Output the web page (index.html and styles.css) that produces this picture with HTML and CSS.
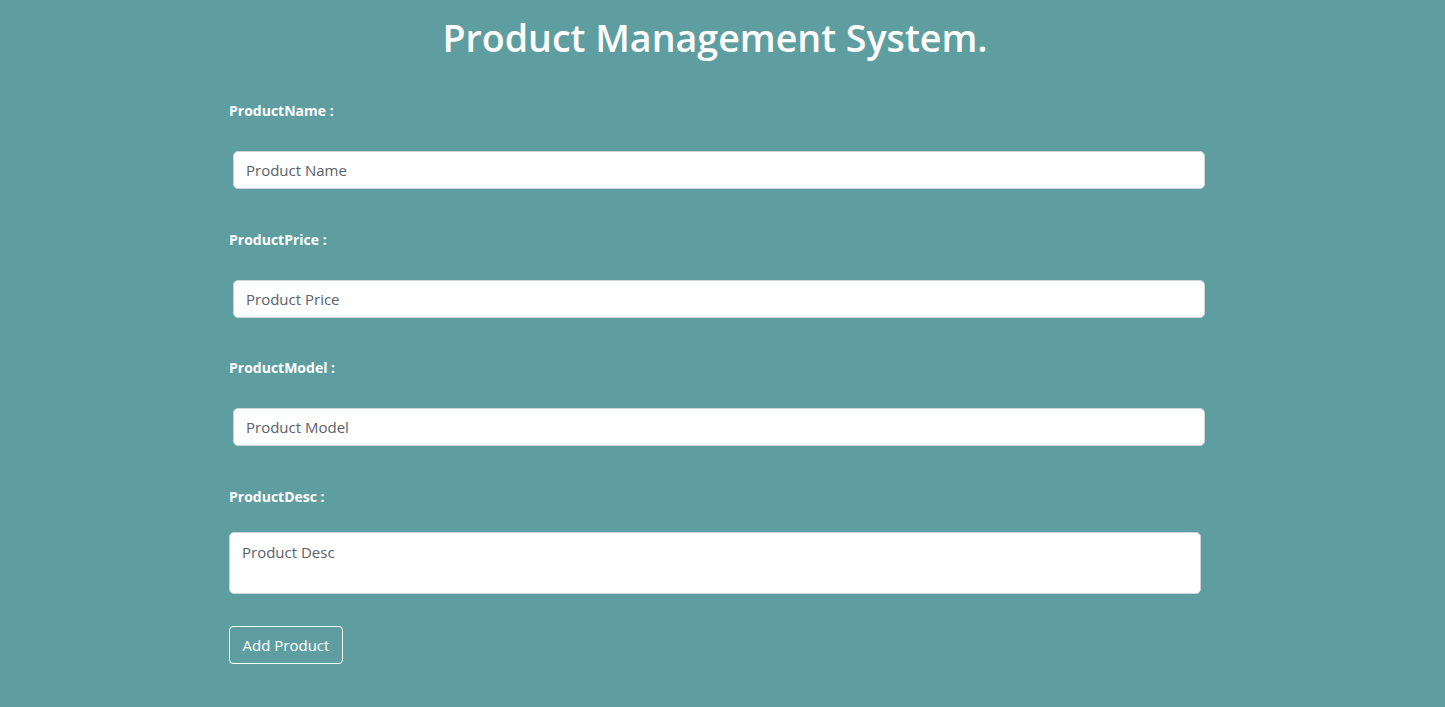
FILE: index.html
```html
<!DOCTYPE html>
<html lang="en">
<head>
  <meta charset="UTF-8">
  <meta name="viewport" content="width=device-width, initial-scale=1.0">
  <title>Product Management System</title>
  <link rel="stylesheet" href="styles.css">
</head>
<body>

<h1 class="title">Product Management System.</h1>

<div class="container">
  <div class="field">
    <label for="name">ProductName :</label>
    <input id="name" class="form-control shifted" type="text" placeholder="Product Name">
  </div>

  <div class="field">
    <label for="price">ProductPrice :</label>
    <input id="price" class="form-control shifted" type="text" placeholder="Product Price">
  </div>

  <div class="field">
    <label for="model">ProductModel :</label>
    <input id="model" class="form-control shifted" type="text" placeholder="Product Model">
  </div>

  <div class="field last">
    <label for="desc">ProductDesc :</label>
    <textarea id="desc" class="form-control desc" placeholder="Product Desc"></textarea>
  </div>

  <button class="btn-add">Add Product</button>
</div>

</body>
</html>
```

FILE: styles.css
```css
body {
  margin: 0;
  background-color: #5f9ea0;
  font-family: "Open Sans", "Noto Sans", sans-serif;
  color: #fff;
}

.title {
  text-align: center;
  font-size: 37.6px;
  font-weight: 600;
  line-height: 48px;
  margin: 14px 0 0;
  padding-right: 15px;
}

.container {
  max-width: 987px;
  margin: 0 auto;
  padding-top: 39px;
}

.field {
  margin-bottom: 40.5px;
}

.field label {
  display: block;
  font-size: 14px;
  font-weight: 700;
  line-height: 20px;
  margin-bottom: 30px;
}

.form-control {
  display: block;
  box-sizing: border-box;
  width: 972px;
  height: 38px;
  padding: 6px 12px;
  font-family: inherit;
  font-size: 15px;
  color: #495057;
  background: #fff;
  border: 1px solid #ced4da;
  border-radius: 5px;
  outline: none;
}

.form-control::placeholder {
  color: #5a6168;
}

.shifted {
  margin-left: 4px;
}

.field.last {
  margin-bottom: 32px;
}

.field.last label {
  margin-bottom: 25px;
}

.desc {
  height: 62px;
  padding: 8px 12px;
  resize: none;
  line-height: 22px;
}

.btn-add {
  box-sizing: border-box;
  width: 114px;
  height: 38px;
  padding: 0;
  font-family: inherit;
  font-size: 15px;
  color: #fff;
  background: transparent;
  border: 1px solid #fff;
  border-radius: 4px;
  cursor: pointer;
}
```
